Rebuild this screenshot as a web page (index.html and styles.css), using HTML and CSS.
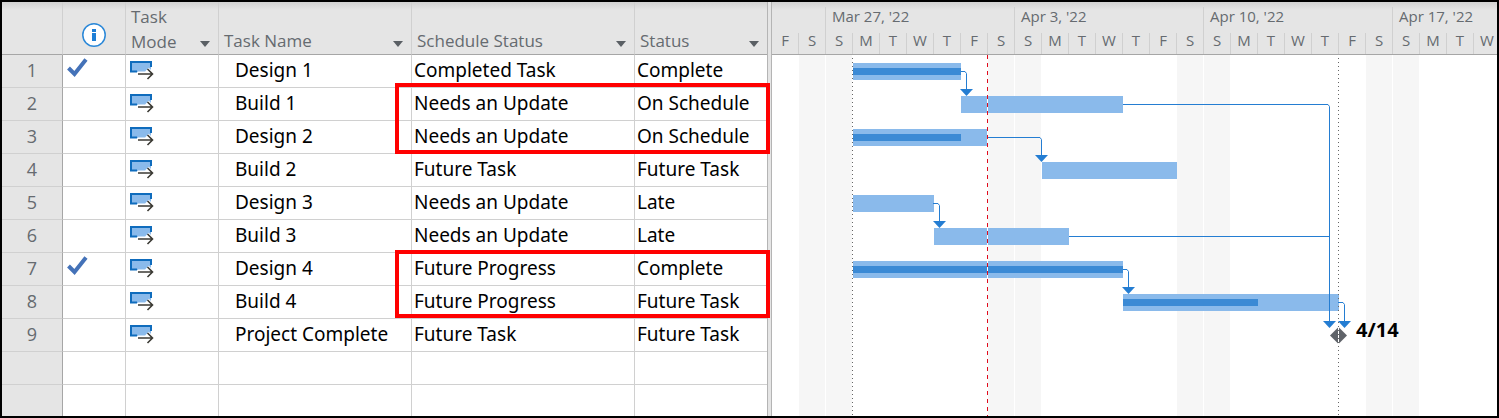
FILE: index.html
```
<!DOCTYPE html>
<html lang="en">
<head>
  <meta charset="UTF-8" />
  <meta name="viewport" content="width=device-width, initial-scale=1.0"/>
  <title>Project Schedule</title>
  <link rel="stylesheet" href="styles.css">
</head>
<body>

<svg class="defs" aria-hidden="true">
  <symbol id="check" viewBox="0 0 21 20">
    <path d="M1.5 10 7.500 16 19 1.500" fill="none" stroke="#4472b8" stroke-width="4"/>
  </symbol>
  <symbol id="auto" viewBox="0 0 24 20">
    <path d="M1 2h20v10H1z" fill="#8abaeb"/>
    <path d="M7 11.500H1V2h20v5" fill="none" stroke="#0f6cbd" stroke-width="2"/>
    <path d="M8 14h14M17 9.500l4.500 4.500-4.500 4.500" fill="none" stroke="#fff" stroke-width="5"/>
    <path d="M8 14h14M17.500 9l5 5-5 5" fill="none" stroke="#3b3a34" stroke-width="1.600"/>
  </symbol>
</svg>

<main class="window">

  <section class="sheet">
    <table>
      <colgroup>
        <col class="col-id"><col class="col-info"><col class="col-mode">
        <col class="col-name"><col class="col-schedule"><col class="col-status">
      </colgroup>
      <thead>
        <tr>
          <th></th>
          <th class="info">
            <svg width="24" height="24" viewBox="0 0 24 24" role="img" aria-label="Indicators">
              <circle cx="12" cy="12" r="11.200" fill="#fff" stroke="#2b88d8" stroke-width="1.500"/>
              <path d="M12 6v3M12 10v8" stroke="#1f7fd6" stroke-width="4"/>
            </svg>
          </th>
          <th><div class="head"><span class="double">Task<br>Mode</span><button aria-label="Filter Task Mode"></button></div></th>
          <th><div class="head"><span>Task Name</span><button aria-label="Filter Task Name"></button></div></th>
          <th><div class="head"><span>Schedule Status</span><button aria-label="Filter Schedule Status"></button></div></th>
          <th><div class="head"><span>Status</span><button aria-label="Filter Status"></button></div></th>
        </tr>
      </thead>
      <tbody id="tasks"></tbody>
    </table>
    <div class="highlight first"></div>
    <div class="highlight second"></div>
  </section>

  <div class="splitter"></div>

  <section class="gantt">
    <div class="weeks">
      <span></span>
      <span>Mar 27, '22</span>
      <span>Apr 3, '22</span>
      <span>Apr 10, '22</span>
      <span>Apr 17, '22</span>
    </div>
    <div class="days" id="days"></div>
    <div class="chart">
      <div class="shading" id="shading"></div>
      <div class="bars" id="bars"></div>
      <div class="line start"></div>
      <div class="line finish"></div>
      <div class="line today"></div>
      <svg class="links" width="729" height="363" aria-hidden="true">
        <g fill="none" stroke="#247dd2">
          <path d="M189 16.500h4l1.500 2V35"/>
          <path d="M216 82.500h52l1.500 2V101"/>
          <path d="M161 148.500h5l1.500 2V167"/>
          <path d="M351 214.500h4l1.500 2V233"/>
          <path d="M566 247.500h5l1.500 2V267"/>
          <path d="M351 49.500h205l1.500 2V267"/>
          <path d="M297 181.500h260"/>
        </g>
        <g fill="#247dd2">
          <path d="M188 34h13l-6.500 7z"/>
          <path d="M263 100h13l-6.500 7z"/>
          <path d="M161 166h13l-6.500 7z"/>
          <path d="M350 232h13l-6.500 7z"/>
          <path d="M566 266h13l-6.500 7z"/>
          <path d="M551 266h13l-6.500 7z"/>
        </g>
        <path d="M558 280.500l8-8v16zM575 280.500l-8-8v16z" fill="#5f6369"/>
      </svg>
    </div>
  </section>

</main>

<script>
(() => {
  // from / to are day columns, done is the percent complete
  const tasks = [
    { name: 'Design 1', schedule: 'Completed Task', status: 'Complete', from: 4, to: 8, done: 100, check: true },
    { name: 'Build 1', schedule: 'Needs an Update', status: 'On Schedule', from: 8, to: 14, done: 0 },
    { name: 'Design 2', schedule: 'Needs an Update', status: 'On Schedule', from: 4, to: 9, done: 80 },
    { name: 'Build 2', schedule: 'Future Task', status: 'Future Task', from: 11, to: 16, done: 0 },
    { name: 'Design 3', schedule: 'Needs an Update', status: 'Late', from: 4, to: 7, done: 0 },
    { name: 'Build 3', schedule: 'Needs an Update', status: 'Late', from: 7, to: 12, done: 0 },
    { name: 'Design 4', schedule: 'Future Progress', status: 'Complete', from: 4, to: 14, done: 100, check: true },
    { name: 'Build 4', schedule: 'Future Progress', status: 'Future Task', from: 14, to: 22, done: 62.5 },
    { name: 'Project Complete', schedule: 'Future Task', status: 'Future Task', from: 22, milestone: '4/14' }
  ];

  const body    = document.getElementById('tasks');
  const bars    = document.getElementById('bars');
  const days    = document.getElementById('days');
  const shading = document.getElementById('shading');

  tasks.forEach((t, i) => {
    const check = t.check ? '<svg class="check" width="21" height="20"><use href="#check"/></svg>' : '';
    body.innerHTML += `<tr>
      <th scope="row">${i + 1}</th>
      <td>${check}</td>
      <td><svg class="auto" width="24" height="20"><use href="#auto"/></svg></td>
      <td class="name">${t.name}</td>
      <td>${t.schedule}</td>
      <td>${t.status}</td>
    </tr>`;

    if (t.milestone) {
      bars.innerHTML += `<span class="milestone" style="grid-area: ${i + 1} / ${t.from} / auto / span 3">${t.milestone}</span>`;
    } else {
      bars.innerHTML += `<div class="bar" style="grid-area: ${i + 1} / ${t.from} / auto / ${t.to}"><div class="progress" style="width: ${t.done}%"></div></div>`;
    }
  });

  // blank rows under the last task
  for (let i = 0; i < 2; i++) {
    body.innerHTML += '<tr><th></th><td></td><td></td><td></td><td></td><td></td></tr>';
  }

  [...'FSSMTWTFSSMTWTFSSMTWTFSSMTW'].forEach(d => {
    days.innerHTML += `<span>${d}</span>`;
    shading.innerHTML += d === 'S' ? '<div class="weekend"></div>' : '<div></div>';
  });
})();
</script>

</body>
</html>
```
FILE: styles.css
```
:root {
  --head: #e5e5e5;
  --line: #d0d0d0;
  --edge: #a6a6a6;
  --label: #666b70;
  --bar: #8abaeb;
  --done: #3b8ad5;
  --day: 27px;
  --row: 33px;
}
* {
  box-sizing: border-box;
}
body {
  margin: 0;
  font-family: "Open Sans", "Noto Sans", sans-serif;
  color: #000;
}
.defs {
  display: none;
}
.window {
  display: flex;
  height: 100vh;
  border: 2px solid #000;
  background: #fff;
  overflow: hidden;
}

/* task sheet */
.sheet {
  position: relative;
  flex: none;
}
table {
  border-collapse: separate;
  border-spacing: 0;
  table-layout: fixed;
  width: 765px;
}
.col-id { width: 61px; }
.col-info { width: 63px; }
.col-mode { width: 93px; }
.col-name { width: 193px; }
.col-schedule { width: 223px; }
.col-status { width: 132px; }
th, td {
  height: var(--row);
  padding: 0 0 2px 2px;
  border-right: 1px solid var(--line);
  border-bottom: 1px solid var(--line);
  text-align: left;
  white-space: nowrap;
}
th:last-child, td:last-child {
  border-right: none;
}
td {
  font-family: "Noto Sans", sans-serif;
  font-size: 19px;
  line-height: 28px;
}
td svg {
  display: block;
}
thead th {
  height: 53px;
  padding: 0 8px 0 5px;
  background: linear-gradient(#d2d2d2, var(--head) 8px);
  border-bottom-color: var(--edge);
  color: var(--label);
  font-size: 17px;
  font-weight: 400;
  line-height: 27px;
  vertical-align: bottom;
}
thead th.info {
  padding: 0;
  text-align: center;
  vertical-align: middle;
}
.info svg {
  display: block;
  margin: 14px auto 0;
}
tbody th {
  padding: 0 0 2px;
  background: var(--head);
  border-right-color: var(--edge);
  color: var(--label);
  font-size: 18px;
  font-weight: 400;
  line-height: 28px;
  text-align: center;
}
.name {
  padding-left: 16px;
}
.head {
  display: flex;
  align-items: flex-end;
  justify-content: space-between;
}
.head .double {
  line-height: 25px;
}
.head button {
  width: 10px;
  height: 6px;
  margin-bottom: 7px;
  padding: 0;
  border: none;
  background: #5a5f64;
  clip-path: polygon(0 0, 100% 0, 50% 100%);
  cursor: pointer;
}
.check {
  margin: 0 0 4px 2px;
}
.auto {
  margin-left: 2px;
}
.highlight {
  position: absolute;
  left: 393px;
  right: -3px;
  border: 4px solid #f00;
  z-index: 1;
}
.first {
  top: 81px;
  height: 71px;
}
.second {
  top: 248px;
  height: 68px;
}
.splitter {
  flex: none;
  width: 5px;
  background: var(--head);
  border: solid #b4b4b4;
  border-width: 0 1px;
}

/* gantt */
.gantt {
  flex: 1;
  min-width: 0;
  display: flex;
  flex-direction: column;
  overflow: hidden;
}
.weeks, .days {
  flex: none;
  display: grid;
  color: var(--label);
  background: var(--head);
}
.weeks {
  grid-template-columns: calc(var(--day) * 2) repeat(4, calc(var(--day) * 7));
  height: 31px;
  padding-top: 5px;
  background: linear-gradient(#d2d2d2, var(--head) 8px);
  font-size: 15px;
  line-height: 18px;
}
.weeks span {
  padding-left: 6px;
  border-right: 1px solid var(--line);
}
.days {
  grid-template-columns: repeat(27, var(--day));
  height: 22px;
  border-bottom: 1px solid var(--edge);
  font-size: 15px;
  line-height: 14px;
  text-align: center;
}
.days span {
  border-right: 1px solid var(--line);
}
.chart {
  position: relative;
  flex: 1;
}
.shading, .bars {
  position: absolute;
  inset: 0;
  display: grid;
  grid-template-columns: repeat(27, var(--day));
}
.weekend {
  background: #f6f6f6;
  border-right: 1px solid #fff;
}
.bars {
  grid-template-rows: repeat(9, var(--row));
  align-items: center;
}
.bar {
  height: 17px;
  padding: 5px 0;
  background: var(--bar);
}
.progress {
  height: 7px;
  background: var(--done);
}
.milestone {
  padding: 0 0 12px 17px;
  font-size: 20px;
  font-weight: 700;
  line-height: 24px;
}
.line {
  position: absolute;
  top: 0;
  bottom: 0;
  width: 1px;
}
.start, .finish {
  background: repeating-linear-gradient(transparent 0 3px, #666 3px 4px);
}
.start {
  left: 80px;
}
.finish {
  left: 566px;
}
.today {
  left: 215px;
  background: repeating-linear-gradient(#e00b1c 0 4px, #fff 4px 8px);
}
.links {
  position: absolute;
  top: 0;
  left: 0;
}
```
